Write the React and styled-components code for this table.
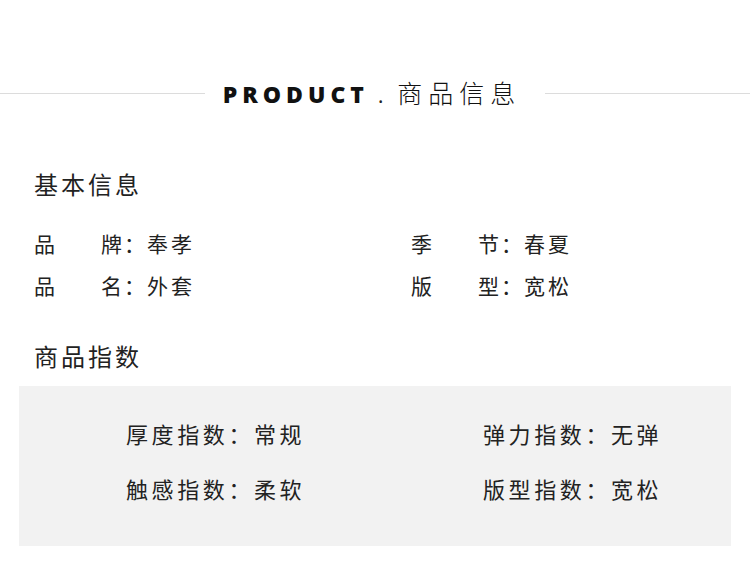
import React from "react";
import styled, { createGlobalStyle } from "styled-components";

const GlobalStyle = createGlobalStyle`
    body {
        margin: 0;
        background: #fff;
        font-family: "Noto Sans CJK SC", "Noto Sans", sans-serif;
        color: #333;
    }
`

const basic = [
    [{ label: ["品", "牌"], value: "奉孝" }, { label: ["季", "节"], value: "春夏" }],
    [{ label: ["品", "名"], value: "外套" }, { label: ["版", "型"], value: "宽松" }],
];

const indexes = [
    [{ label: "厚度指数", value: "常规" }, { label: "弹力指数", value: "无弹" }],
    [{ label: "触感指数", value: "柔软" }, { label: "版型指数", value: "宽松" }],
];

const App = () => {
    return (
        <>
            <GlobalStyle />
            <Page>
                <Header>
                    <Line />
                    <Title>
                        <Eng>PRODUCT</Eng>
                        <Dot>.</Dot>
                        <Cn>商品信息</Cn>
                    </Title>
                    <Line />
                </Header>

                <Heading>基本信息</Heading>
                <BasicGrid>
                    {basic.flat().map((item, i) => (
                        <BasicRow key={i}>
                            <Label>
                                {item.label.map(c => <span key={c}>{c}</span>)}
                            </Label>
                            <Colon>：</Colon>
                            <Value>{item.value}</Value>
                        </BasicRow>
                    ))}
                </BasicGrid>

                <Heading $top={35}>商品指数</Heading>
                <Box>
                    {indexes.flat().map((item, i) => (
                        <IndexRow key={i}>
                            {item.label}：{item.value}
                        </IndexRow>
                    ))}
                </Box>
            </Page>
        </>
    )
}

const Page = styled.div`
    width: 750px;
    height: 566px;
    overflow: hidden;
`

const Header = styled.div`
    display: flex;
    align-items: center;
    margin-top: 77px;
    height: 30px;
`

const Line = styled.div`
    flex: 1;
    height: 1px;
    background: #dcdcdc;
    margin-top: 2px;
`

const Title = styled.div`
    display: flex;
    align-items: baseline;
    margin: 0 24px 0 18px;
    white-space: nowrap;
`

const Eng = styled.span`
    font-family: "Open Sans", "Noto Sans", sans-serif;
    font-weight: 800;
    font-size: 23px;
    letter-spacing: 5px;
    color: #111;
`

const Dot = styled.span`
    font-family: "Noto Sans", sans-serif;
    font-size: 20px;
    color: #222;
    margin: 0 14px 0 9px;
`

const Cn = styled.span`
    font-weight: 300;
    font-size: 25px;
    letter-spacing: 6px;
    color: #111;
`

const Heading = styled.div`
    margin: ${p => p.$top || 62}px 0 0 34px;
    font-size: 24px;
    line-height: 30px;
    letter-spacing: 3px;
    color: #222;
`

const BasicGrid = styled.div`
    display: grid;
    grid-template-columns: 377px 1fr;
    margin: 23px 0 0 34px;
`

const BasicRow = styled.div`
    display: flex;
    align-items: center;
    height: 42px;
    font-size: 21px;
    color: #222;
`

const Label = styled.span`
    display: flex;
    justify-content: space-between;
    width: 88px;
`

const Colon = styled.span`
    width: 25px;
    text-align: center;
`

const Value = styled.span`
    letter-spacing: 3px;
`

const Box = styled.div`
    display: grid;
    grid-template-columns: 357px 1fr;
    margin: 15px 19px 0;
    padding: 20px 0 30px 107px;
    background: #f2f2f2;
`

const IndexRow = styled.div`
    height: 55px;
    line-height: 55px;
    font-size: 22px;
    letter-spacing: 3.6px;
    color: #222;
`

export default App;
